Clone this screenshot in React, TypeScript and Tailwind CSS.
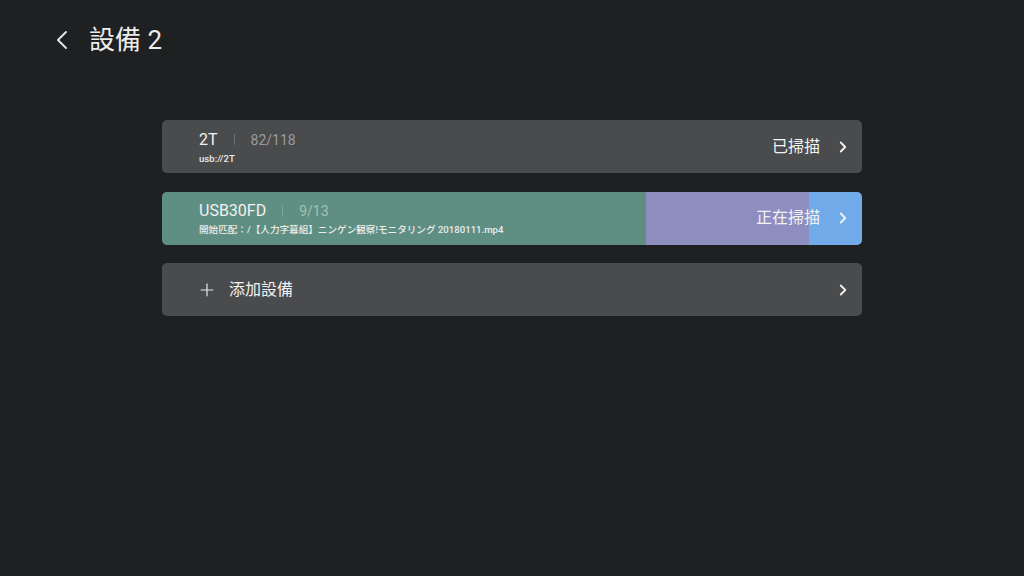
import { ChevronLeft, ChevronRight, Plus } from 'lucide-react';

const font = { fontFamily: 'Roboto, "Noto Sans CJK TC", "Noto Sans", sans-serif' };

function Divider() {
  return <span className="mx-4 h-[11px] w-px bg-white/20" />;
}

function Card({
  name,
  count,
  sub,
  status,
  progress,
}: {
  name: string;
  count: string;
  sub: string;
  status: string;
  progress?: { done: number; scanned: number };
}) {
  return (
    <div className="relative h-[53px] overflow-hidden rounded-[5px] bg-[#4a4b4d]">
      {progress && (
        <div className="absolute inset-0 flex">
          <div className="bg-[#5f8f82]" style={{ width: `${progress.done}%` }} />
          <div className="bg-[#8e8dbf]" style={{ width: `${progress.scanned}%` }} />
          <div className="flex-1 bg-[#71aae8]" />
        </div>
      )}
      <div className="relative flex h-full items-center pl-[37px] pr-[10px]">
        <div className="flex flex-1 flex-col pt-[1px]">
          <div className="flex items-center leading-[20px]">
            <span className="text-[16px] text-[#f2f2f2]">{name}</span>
            <Divider />
            <span className="text-[14px] text-white/45">{count}</span>
          </div>
          <div className="mt-[3px] text-[9.6px] font-medium leading-[12px] text-[#ececec]">{sub}</div>
        </div>
        <span className="text-[16px] text-[#f2f2f2]">{status}</span>
        <ChevronRight size={18} strokeWidth={2.4} className="ml-[14px] text-[#f2f2f2]" />
      </div>
    </div>
  );
}

export default function App() {
  return (
    <div className="h-[576px] w-[1024px] bg-[#1f2022] text-white" style={font}>
      <header className="flex h-[80px] items-center pl-[46px]">
        <ChevronLeft size={32} strokeWidth={1.4} className="text-[#e6e6e6]" />
        <h1 className="ml-[11px] text-[26px] font-normal text-[#ececec]">設備 2</h1>
      </header>

      <div className="mx-auto mt-[40px] flex w-[700px] flex-col gap-[18.5px]">
        <Card name="2T" count="82/118" sub="usb://2T" status="已掃描" />
        <Card
          name="USB30FD"
          count="9/13"
          sub="開始匹配：/【人力字幕組】ニンゲン観察!モニタリング 20180111.mp4"
          status="正在掃描"
          progress={{ done: 69.2, scanned: 23.2 }}
        />
        <div className="flex h-[53px] items-center rounded-[5px] bg-[#4a4b4d] pl-[35px] pr-[10px]">
          <Plus size={20} strokeWidth={1.4} className="text-[#ececec]" />
          <span className="ml-[12px] flex-1 text-[16px] text-[#f2f2f2]">添加設備</span>
          <ChevronRight size={18} strokeWidth={2.4} className="text-[#f2f2f2]" />
        </div>
      </div>
    </div>
  );
}
